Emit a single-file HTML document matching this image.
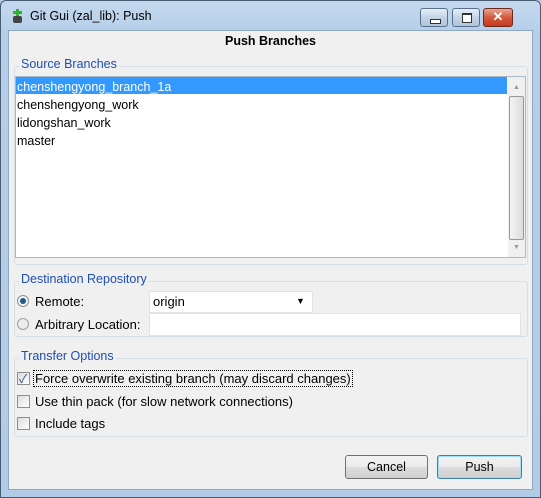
<!DOCTYPE html><html><head><style>
body{margin:0;width:541px;height:498px;overflow:hidden;background:#b4cde6;font-family:"Liberation Sans","Noto Sans CJK SC",sans-serif;font-size:12px;color:#000}
.abs{position:absolute}
#frame{left:0;top:0;width:539px;height:496px;border:1px solid #4a5c73;border-radius:6px 6px 0 0;background:linear-gradient(#c5d9ee,#b6cfe9 30px,#b2cce7)}
#client{left:8px;top:30px;width:525px;height:460px;background:#f0f0f0;border:1px solid #8fa9c4;box-sizing:border-box}
.grp{border:1px solid #d5dfe5;border-radius:3px;box-sizing:border-box}
.lbl{color:#1f4fb0;background:#f0f0f0;padding:0 2px;font-size:12.5px}
.wb{top:8px;height:19px;border:1px solid #5a6f8a;border-radius:3px;box-sizing:border-box;background:linear-gradient(#e6eef8,#c3d4e8 50%,#b0c4de)}
.cb{width:13px;height:13px;border:1px solid #8f8f8f;background:linear-gradient(135deg,#dcdcdc,#fff);box-sizing:border-box}
.t13{font-size:13px}
.btn{height:24px;border:1px solid #707070;border-radius:3px;box-sizing:border-box;background:linear-gradient(#f2f2f2,#ebebeb 50%,#dddddd 51%,#cfcfcf);text-align:center;line-height:22px;font-size:12.5px}
</style></head><body>
<div id="frame" class="abs"></div>
<div class="abs" style="left:12px;top:9px;width:11px;height:14px">
<div class="abs" style="left:4px;top:0;width:3px;height:7px;background:#2fb02f"></div>
<div class="abs" style="left:1px;top:2px;width:9px;height:3px;background:#2fb02f"></div>
<div class="abs" style="left:1px;top:7px;width:9px;height:7px;background:#444;border-radius:2px"></div></div>
<div class="abs" style="left:30px;top:9px;font-size:12.5px">Git Gui (zal_lib): Push</div>
<div class="abs wb" style="left:420px;width:28px"><div class="abs" style="left:9px;top:10px;width:9px;height:3px;border:1px solid #333;background:#fff"></div></div>
<div class="abs wb" style="left:452px;width:28px"><div class="abs" style="left:9px;top:4px;width:8px;height:7px;border:1px solid #333;border-top-width:2px;background:#fff"></div></div>
<div class="abs wb" style="left:483px;width:30px;background:linear-gradient(#e8a593,#d4583f 50%,#c43b22);border-color:#6b2a20;color:#fff;font-weight:bold;text-align:center;line-height:16px;font-size:13px">✕</div>
<div id="client" class="abs"></div>
<div class="abs" style="left:8px;width:525px;top:34px;text-align:center;font-weight:bold;font-size:12.5px">Push Branches</div>
<div class="abs grp" style="left:14px;top:66px;width:514px;height:199px"></div>
<div class="abs lbl" style="left:19px;top:57px">Source Branches</div>
<div class="abs" style="left:15px;top:76px;width:511px;height:182px;background:#fff;border:1px solid #a9b9c9;box-sizing:border-box"></div>
<div class="abs" style="left:16px;top:77px;width:491px;height:17px;background:#3399ff"></div>
<div class="abs" style="left:17px;top:78px;line-height:18px;font-size:12.5px"><div style="color:#fff">chenshengyong_branch_1a</div><div>chenshengyong_work</div><div>lidongshan_work</div><div>master</div></div>
<div class="abs" style="left:508px;top:77px;width:17px;height:180px;background:#f0f0f0"></div>
<div class="abs" style="left:513px;top:84px;color:#999;font-size:7px">▲</div>
<div class="abs" style="left:509px;top:96px;width:13px;height:142px;border:1px solid #979797;border-radius:2px;background:linear-gradient(90deg,#f4f4f4,#dcdcdc)"></div>
<div class="abs" style="left:513px;top:244px;color:#999;font-size:7px">▼</div>
<div class="abs grp" style="left:14px;top:281px;width:514px;height:56px"></div>
<div class="abs lbl" style="left:19px;top:272px">Destination Repository</div>
<div class="abs" style="left:17px;top:295px;width:12px;height:12px;border-radius:50%;border:1px solid #8f8f8f;box-sizing:border-box;background:#f4f4f4"><div class="abs" style="left:2px;top:2px;width:6px;height:6px;border-radius:50%;background:#1d5b8c"></div></div>
<div class="abs t13" style="left:35px;top:294px">Remote:</div>
<div class="abs" style="left:149px;top:291px;width:164px;height:22px;background:#fff;border:1px solid #e2e2e2;box-sizing:border-box"></div>
<div class="abs t13" style="left:153px;top:294px">origin</div>
<div class="abs" style="left:296px;top:296px;font-size:9px">▼</div>
<div class="abs" style="left:17px;top:318px;width:12px;height:12px;border-radius:50%;border:1px solid #9f9f9f;box-sizing:border-box;background:#ececec"></div>
<div class="abs t13" style="left:35px;top:317px">Arbitrary Location:</div>
<div class="abs" style="left:149px;top:313px;width:372px;height:23px;background:#fff;border:1px solid #e2e2e2;box-sizing:border-box"></div>
<div class="abs grp" style="left:14px;top:358px;width:514px;height:79px"></div>
<div class="abs lbl" style="left:19px;top:349px">Transfer Options</div>
<div class="abs cb" style="left:17px;top:372px"></div><div class="abs" style="left:19px;top:370px;color:#2b4f8a;font-size:12px">✓</div>
<div class="abs t13" style="left:33px;top:370px;border:1px dotted #000;padding:0 1px">Force overwrite existing branch (may discard changes)</div>
<div class="abs cb" style="left:17px;top:395px"></div>
<div class="abs t13" style="left:35px;top:394px">Use thin pack (for slow network connections)</div>
<div class="abs cb" style="left:17px;top:417px"></div>
<div class="abs t13" style="left:35px;top:416px">Include tags</div>
<div class="abs btn" style="left:345px;top:455px;width:83px">Cancel</div>
<div class="abs btn" style="left:437px;top:455px;width:85px;border-color:#3c7fb1;box-shadow:inset 0 0 0 1px #9fdcf5">Push</div>
</body></html>
